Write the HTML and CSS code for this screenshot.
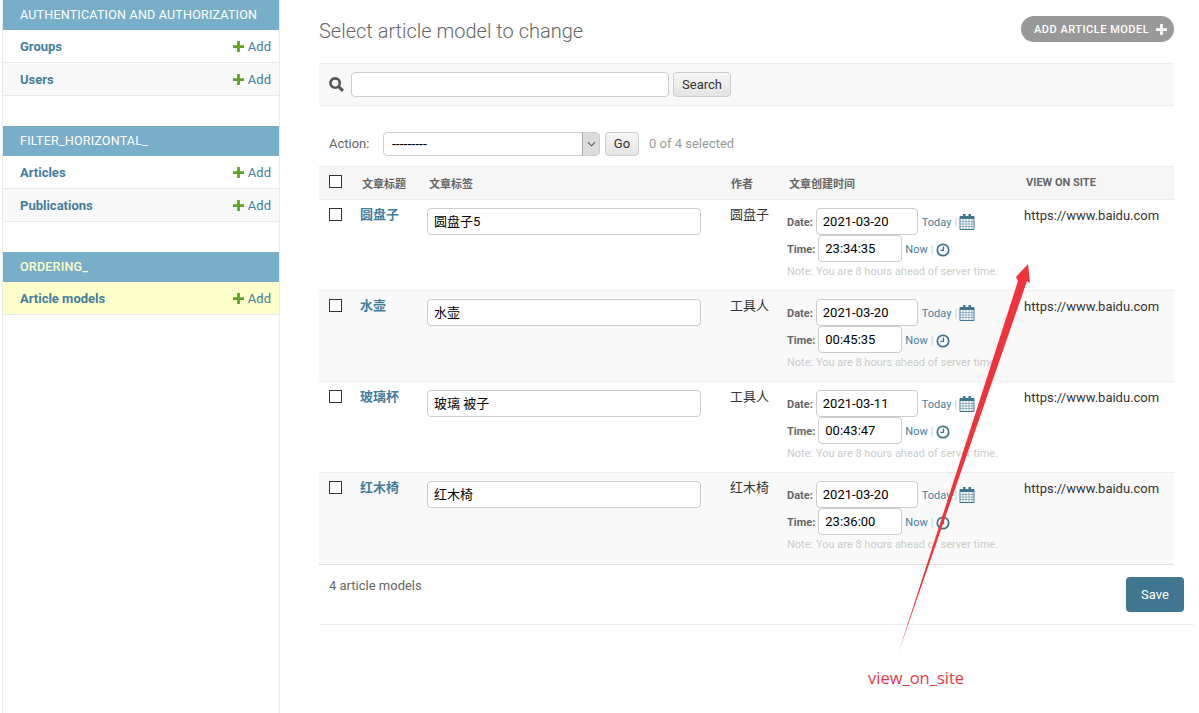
FILE: index.html
```html
<!DOCTYPE html>
<html lang="en">
<head>
    <meta charset="UTF-8">
    <title>Select article model to change</title>
    <link rel="stylesheet" href="styles.css">
</head>
<body>
    <svg class="defs" width="0" height="0">
        <symbol id="i-plus" viewBox="0 0 12 12"><path d="M4.5 0h3v4.5H12v3H7.5V12h-3V7.5H0v-3h4.5z"/></symbol>
        <symbol id="i-cal" viewBox="0 0 16 17">
            <path d="M1 3.5h14v13H1z" fill="#fff" stroke="#417690" stroke-width="1"/>
            <path d="M1 3h14v3H1z" fill="#417690"/>
            <path d="M4 1h2.5v4H4zM9.5 1H12v4H9.5z" fill="#417690"/>
            <path d="M1 8.5h14M1 11h14M1 13.5h14M4 6v10M7 6v10M10 6v10M13 6v10" stroke="#7fa5b8" stroke-width=".8" fill="none"/>
        </symbol>
        <symbol id="i-clock" viewBox="0 0 16 16">
            <circle cx="8" cy="8" r="6.5" fill="none" stroke="#417690" stroke-width="2"/>
            <path d="M8.5 4v4.5H5" fill="none" stroke="#417690" stroke-width="1.5"/>
        </symbol>
    </svg>

    <div class="page">
        <nav class="sidebar">
            <div class="app">
                <div class="app-title">AUTHENTICATION AND AUTHORIZATION</div>
                <div class="model"><a class="model-name">Groups</a><a class="add"><svg class="plus"><use href="#i-plus"/></svg>Add</a></div>
                <div class="model alt"><a class="model-name">Users</a><a class="add"><svg class="plus"><use href="#i-plus"/></svg>Add</a></div>
            </div>
            <div class="app">
                <div class="app-title">FILTER_HORIZONTAL_</div>
                <div class="model"><a class="model-name">Articles</a><a class="add"><svg class="plus"><use href="#i-plus"/></svg>Add</a></div>
                <div class="model alt"><a class="model-name">Publications</a><a class="add"><svg class="plus"><use href="#i-plus"/></svg>Add</a></div>
            </div>
            <div class="app">
                <div class="app-title current">ORDERING_</div>
                <div class="model selected"><a class="model-name">Article models</a><a class="add"><svg class="plus"><use href="#i-plus"/></svg>Add</a></div>
            </div>
        </nav>

        <main class="content">
            <div class="head">
                <h1>Select article model to change</h1>
                <a class="addlink">ADD ARTICLE MODEL<svg class="plus-white"><use href="#i-plus"/></svg></a>
            </div>

            <div class="searchbar">
                <svg class="search-icon" viewBox="0 0 14 14"><circle cx="5.7" cy="5.7" r="4.4" fill="none" stroke="#555" stroke-width="2.4"/><path d="M9 9l4 4" stroke="#555" stroke-width="2.8"/></svg>
                <input class="search-input" type="text">
                <button class="btn search-btn">Search</button>
            </div>

            <div class="actions">
                <span class="action-label">Action:</span>
                <span class="fake-select">---------<span class="select-arrow"><svg viewBox="0 0 10 6" width="9" height="6"><path d="M1 1l4 4 4-4" fill="none" stroke="#555" stroke-width="1.2"/></svg></span></span>
                <button class="btn go-btn">Go</button>
                <span class="counter">0 of 4 selected</span>
            </div>

            <table class="results">
                <thead>
                    <tr>
                        <th class="c-check"><span class="box box-head"></span></th>
                        <th class="c-title">文章标题</th>
                        <th class="c-tags">文章标签</th>
                        <th class="c-author">作者</th>
                        <th class="c-time">文章创建时间</th>
                        <th class="c-site">VIEW ON SITE</th>
                    </tr>
                </thead>
                <tbody>
                    <tr>
                        <td><span class="box"></span></td>
                        <td class="title-cell"><a>圆盘子</a></td>
                        <td><input class="tag-input" type="text" value="圆盘子5"></td>
                        <td class="author">圆盘子</td>
                        <td>
                            <div class="dt"><span class="dt-label">Date:</span><input class="date-input" value="2021-03-20"><a class="dt-link">Today</a><span class="sep">|</span><svg class="cal"><use href="#i-cal"/></svg></div>
                            <div class="dt"><span class="dt-label">Time:</span><input class="time-input" value="23:34:35"><a class="dt-link">Now</a><span class="sep">|</span><svg class="clock"><use href="#i-clock"/></svg></div>
                            <p class="tz">Note: You are 8 hours ahead of server time.</p>
                        </td>
                        <td class="site">https://www.baidu.com</td>
                    </tr>
                    <tr class="alt">
                        <td><span class="box"></span></td>
                        <td class="title-cell"><a>水壶</a></td>
                        <td><input class="tag-input" type="text" value="水壶"></td>
                        <td class="author">工具人</td>
                        <td>
                            <div class="dt"><span class="dt-label">Date:</span><input class="date-input" value="2021-03-20"><a class="dt-link">Today</a><span class="sep">|</span><svg class="cal"><use href="#i-cal"/></svg></div>
                            <div class="dt"><span class="dt-label">Time:</span><input class="time-input" value="00:45:35"><a class="dt-link">Now</a><span class="sep">|</span><svg class="clock"><use href="#i-clock"/></svg></div>
                            <p class="tz">Note: You are 8 hours ahead of server time.</p>
                        </td>
                        <td class="site">https://www.baidu.com</td>
                    </tr>
                    <tr>
                        <td><span class="box"></span></td>
                        <td class="title-cell"><a>玻璃杯</a></td>
                        <td><input class="tag-input" type="text" value="玻璃 被子"></td>
                        <td class="author">工具人</td>
                        <td>
                            <div class="dt"><span class="dt-label">Date:</span><input class="date-input" value="2021-03-11"><a class="dt-link">Today</a><span class="sep">|</span><svg class="cal"><use href="#i-cal"/></svg></div>
                            <div class="dt"><span class="dt-label">Time:</span><input class="time-input" value="00:43:47"><a class="dt-link">Now</a><span class="sep">|</span><svg class="clock"><use href="#i-clock"/></svg></div>
                            <p class="tz">Note: You are 8 hours ahead of server time.</p>
                        </td>
                        <td class="site">https://www.baidu.com</td>
                    </tr>
                    <tr class="alt">
                        <td><span class="box"></span></td>
                        <td class="title-cell"><a>红木椅</a></td>
                        <td><input class="tag-input" type="text" value="红木椅"></td>
                        <td class="author">红木椅</td>
                        <td>
                            <div class="dt"><span class="dt-label">Date:</span><input class="date-input" value="2021-03-20"><a class="dt-link">Today</a><span class="sep">|</span><svg class="cal"><use href="#i-cal"/></svg></div>
                            <div class="dt"><span class="dt-label">Time:</span><input class="time-input" value="23:36:00"><a class="dt-link">Now</a><span class="sep">|</span><svg class="clock"><use href="#i-clock"/></svg></div>
                            <p class="tz">Note: You are 8 hours ahead of server time.</p>
                        </td>
                        <td class="site">https://www.baidu.com</td>
                    </tr>
                </tbody>
            </table>

            <div class="paginator">
                <span class="count">4 article models</span>
                <button class="save">Save</button>
            </div>
        </main>
    </div>

    <!-- annotation drawn on top of the screenshot -->
    <svg class="arrow" viewBox="0 0 1199 713" width="1199" height="713">
        <polygon points="1028,264 1030,283 1027,281 899,651 1018,281 1016,277" fill="#f0333a"/>
    </svg>
    <span class="arrow-label">view_on_site</span>
</body>
</html>
```

FILE: styles.css
```css
* {
    box-sizing: border-box;
}
body {
    margin: 0;
    height: 713px;
    overflow: hidden;
    font-family: Roboto, "Noto Sans CJK SC", sans-serif;
    font-size: 13px;
    color: #333;
    background: #fff;
    position: relative;
}
a {
    color: #447e9b;
}
.defs {
    position: absolute;
}
.page {
    display: flex;
    height: 713px;
}

/* sidebar */
.sidebar {
    width: 278px;
    margin-left: 2px;
    margin-right: 39px;
    flex: none;
    border-left: 1px solid #eaeaea;
    border-right: 1px solid #eaeaea;
}
.app {
    margin-bottom: 30px;
}
.app-title {
    height: 30px;
    line-height: 29px;
    padding-left: 17px;
    background: #79aec8;
    color: #fff;
    font-size: 12.5px;
    letter-spacing: .22px;
}
.app-title.current {
    color: #ffffcc;
    font-weight: 500;
}
.model {
    height: 33px;
    display: flex;
    align-items: center;
    justify-content: space-between;
    padding: 1px 8px 0 17px;
    border-bottom: 1px solid #eaeaea;
    background: #fff;
}
.model.alt {
    background: #f9f9f9;
}
.model.selected {
    background: #ffc;
}
.model-name {
    font-weight: 700;
    color: #447e9b;
}
.add {
    display: flex;
    align-items: center;
    color: #447e9b;
}
.plus {
    width: 11px;
    height: 11px;
    margin-right: 4px;
    fill: #5fa225;
}

/* main column */
.content {
    width: 875px;
    flex: none;
}
.head {
    display: flex;
    justify-content: space-between;
    height: 63px;
    width: 855px;
    padding-top: 16px;
}
h1 {
    margin: 3px 0 0;
    font-size: 20px;
    font-weight: 300;
    color: #666;
    line-height: 24px;
}
.addlink {
    height: 26px;
    width: 153px;
    display: flex;
    align-items: center;
    justify-content: space-between;
    padding: 0 7px 0 13px;
    border-radius: 15px;
    background: #999;
    color: #fff;
    font-size: 11px;
    font-weight: 500;
    letter-spacing: .5px;
}
.plus-white {
    width: 11px;
    height: 11px;
    fill: #fff;
}
.searchbar {
    width: 855px;
    height: 43px;
    display: flex;
    align-items: center;
    padding-left: 10px;
    background: #f8f8f8;
    border-top: 1px solid #eee;
    border-bottom: 1px solid #eee;
}
.search-icon {
    width: 15px;
    height: 15px;
    margin-right: 7px;
}
input {
    font-family: Roboto, "Noto Sans CJK SC", sans-serif;
    font-size: 13px;
    color: #000;
    height: 27px;
    padding: 0 6px;
    border: 1px solid #ccc;
    border-radius: 4px;
    background: #fff;
}
.search-input {
    width: 318px;
    height: 25px;
}
.btn {
    height: 25px;
    padding: 0;
    font-family: Roboto, sans-serif;
    font-size: 13px;
    color: #333;
    border: 1px solid #ccc;
    border-radius: 4px;
    background: linear-gradient(#f6f6f6, #e4e4e4);
}
.search-btn {
    width: 58px;
    margin-left: 4px;
}
.actions {
    width: 855px;
    height: 60px;
    display: flex;
    align-items: center;
    padding: 16px 0 0 10px;
    color: #666;
}
.action-label {
    width: 54px;
    margin-bottom: 2px;
}
.fake-select {
    width: 217px;
    height: 24px;
    display: flex;
    align-items: center;
    justify-content: space-between;
    padding-left: 8px;
    font-size: 14px;
    color: #000;
    border: 1px solid #ccc;
    border-radius: 4px;
    background: #fff;
    overflow: hidden;
}
.select-arrow {
    width: 17px;
    height: 22px;
    display: flex;
    align-items: center;
    justify-content: center;
    background: #dcdcdc;
    border-left: 1px solid #aaa;
}
.go-btn {
    width: 34px;
    height: 24px;
    margin-left: 5px;
    padding-bottom: 2px;
}
.counter {
    margin-left: 10px;
    margin-bottom: 2px;
    color: #999;
}

/* results table */
.results {
    width: 855px;
    table-layout: fixed;
    border-collapse: collapse;
}
.results th {
    height: 33px;
    padding: 0;
    text-align: left;
    font-size: 11px;
    font-weight: 700;
    color: #666;
    background: #f6f6f6;
    border-top: 1px solid #eee;
    border-bottom: 1px solid #eee;
}
.results th.c-check {
    width: 41px;
}
.results th.c-title {
    width: 67px;
    padding-left: 2px;
}
.results th.c-tags {
    width: 303px;
    padding-left: 2px;
}
.results th.c-author {
    width: 58px;
    padding-left: 1px;
}
.results th.c-time {
    width: 236px;
    padding-left: 1px;
}
.results th.c-site {
    width: 150px;
    padding-left: 2px;
    padding-bottom: 2px;
}
.results td {
    height: 91px;
    padding: 8px 0 0;
    vertical-align: top;
    border-bottom: 1px solid #eee;
}
.results tr.alt td {
    background: #f9f9f9;
}
.results tbody tr:last-child td {
    height: 92px;
    border-bottom: 1px solid #ddd;
}
.box {
    display: block;
    width: 13px;
    height: 13px;
    margin: 0 0 0 10px;
    background: #fff;
    border: 1px solid #333;
}
.box-head {
    margin-bottom: 4px;
}
.title-cell {
    font-size: 13px;
    font-weight: 700;
    line-height: 13px;
}
.tag-input {
    display: block;
    width: 274px;
    padding-bottom: 2px;
}
.results td.author {
    font-size: 13px;
    line-height: 13px;
    color: #333;
}
.dt {
    height: 27px;
    display: flex;
    align-items: center;
    margin-left: -1px;
}
.dt-label {
    margin-top: 2px;
    font-size: 11px;
    font-weight: 700;
    color: #666;
}
.date-input {
    width: 102px;
    margin: 0 4px 0 3px;
    padding: 0 6px;
}
.time-input {
    width: 84px;
    margin: 0 3px 0 3px;
    padding: 0 6px;
}
.dt-link {
    margin-top: 2px;
    font-size: 11px;
    color: #447e9b;
}
.sep {
    margin: 2px 2px 0 3px;
    font-size: 11px;
    color: #ccc;
}
.cal {
    width: 16px;
    height: 17px;
}
.clock {
    width: 14px;
    height: 14px;
    margin: 2px 0 0 1px;
}
.tz {
    margin: 3px 0 0 -1px;
    font-size: 11px;
    line-height: 13px;
    color: #ccc;
}
.site {
    font-size: 13px;
    color: #333;
}
.paginator {
    height: 60px;
    display: flex;
    justify-content: space-between;
    align-items: flex-start;
    padding: 12px 10px 0 10px;
    color: #666;
    border-bottom: 1px solid #eee;
}
.count {
    margin-top: 1px;
}
.save {
    width: 58px;
    height: 35px;
    padding: 0;
    border: 0;
    border-radius: 4px;
    font-family: Roboto, sans-serif;
    font-size: 13px;
    color: #fff;
    background: #417690;
}

/* red annotation */
.arrow {
    position: absolute;
    left: 0;
    top: 0;
    pointer-events: none;
}
.arrow-label {
    position: absolute;
    left: 868px;
    top: 668px;
    font-family: "Open Sans", sans-serif;
    font-size: 16.5px;
    line-height: 20px;
    color: #e63946;
}
```
